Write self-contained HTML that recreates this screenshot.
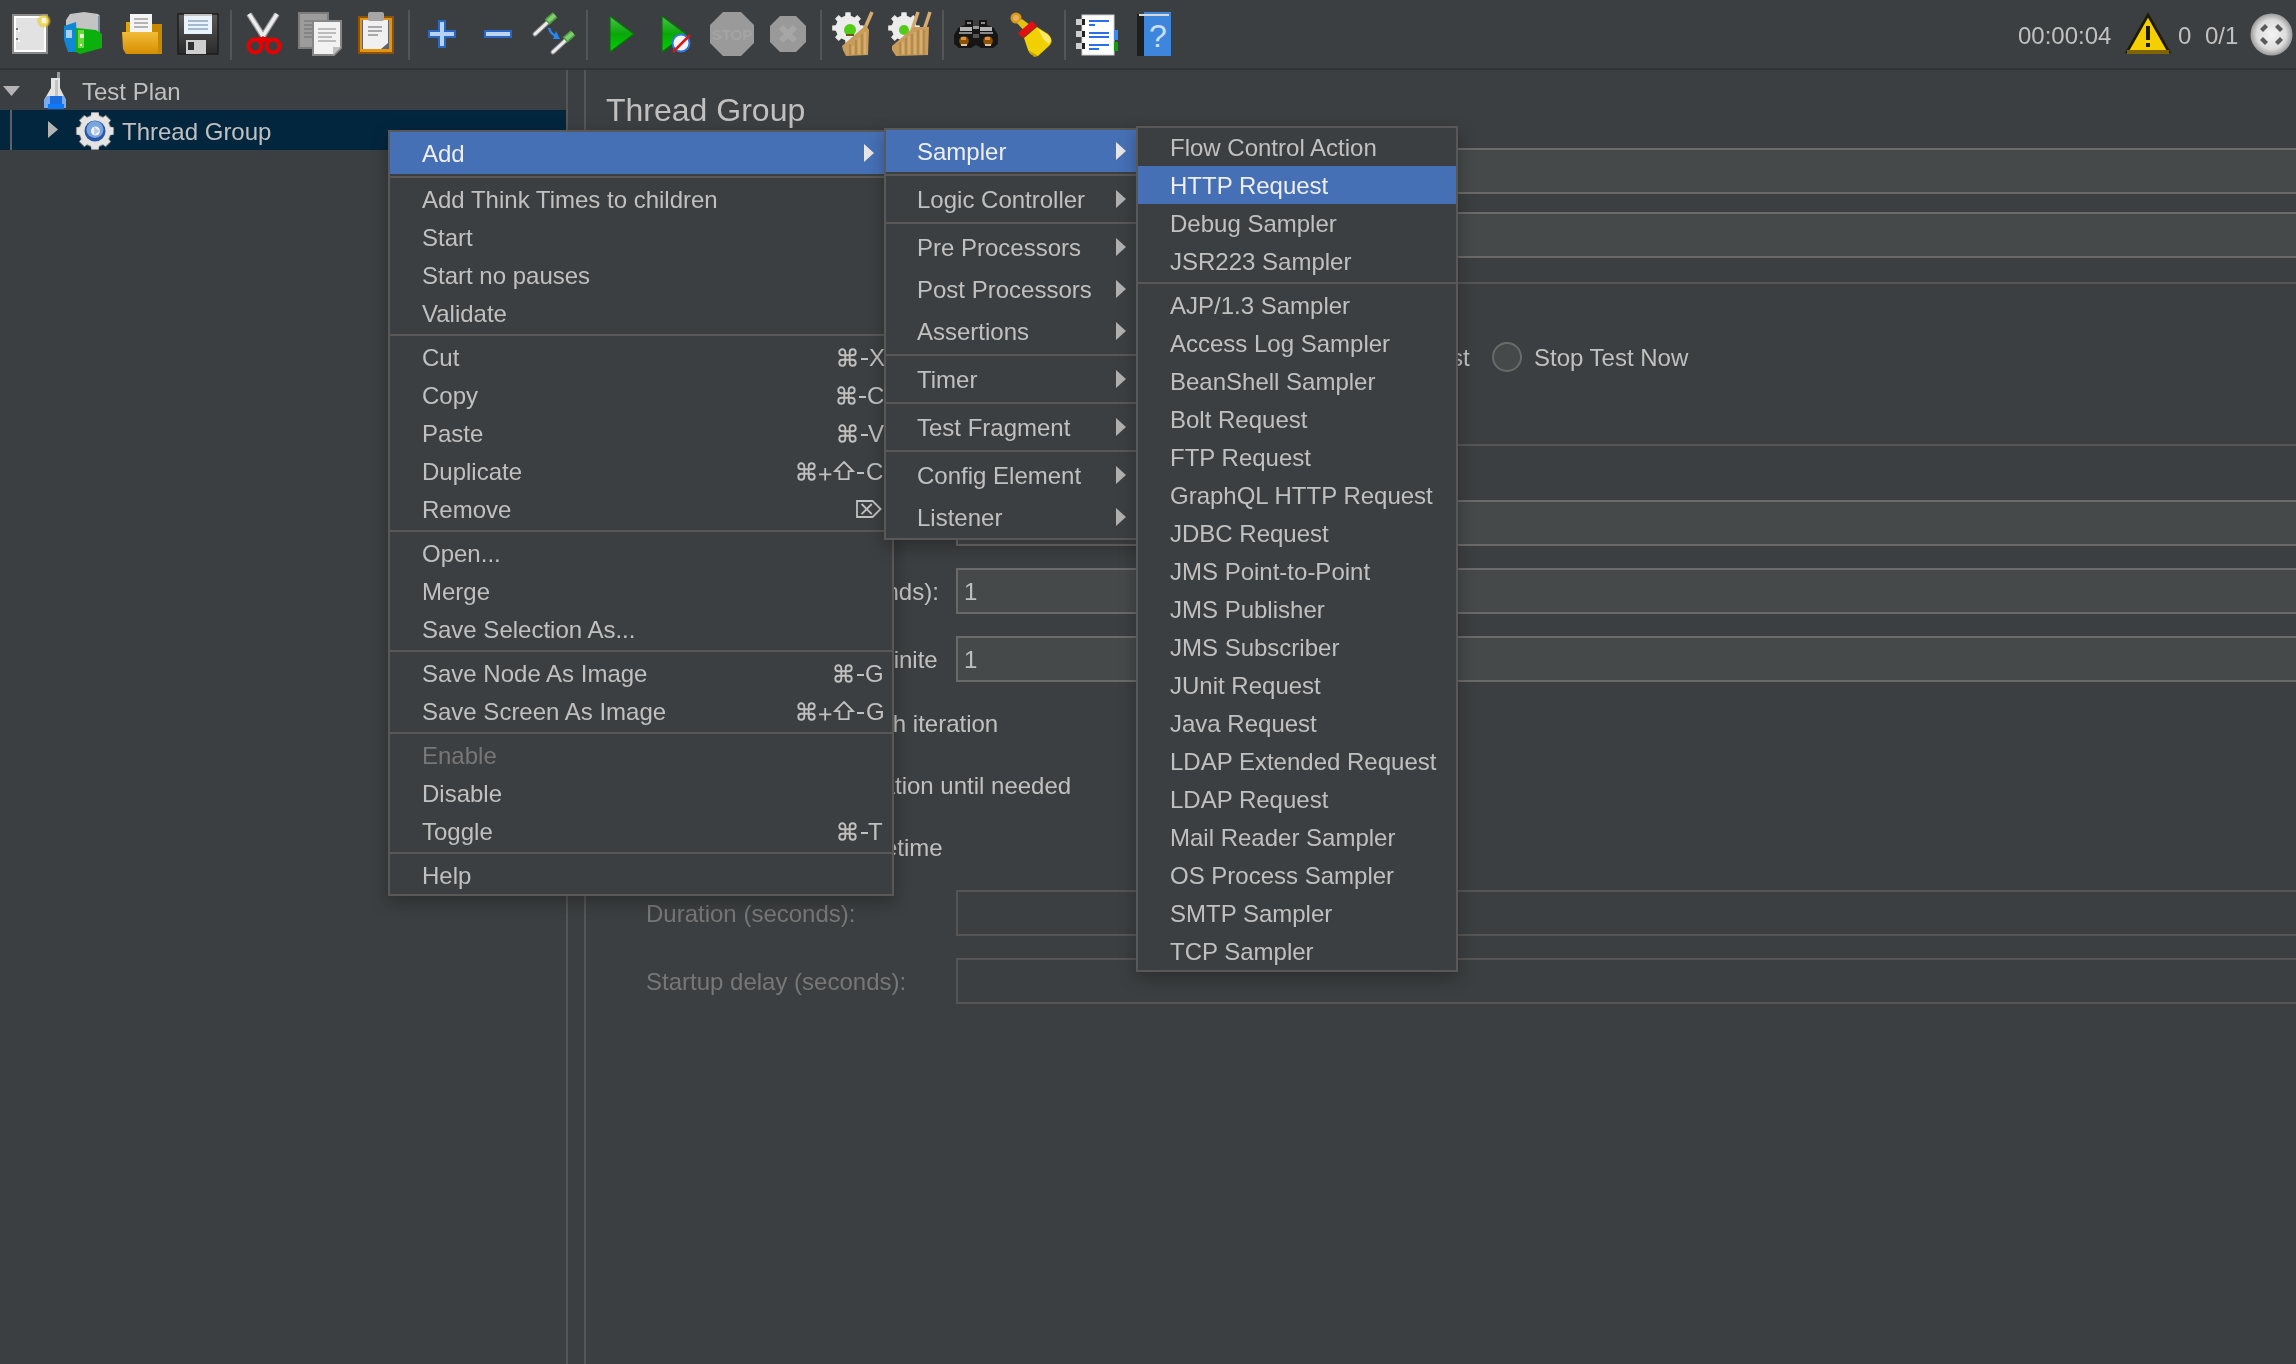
<!DOCTYPE html>
<html><head><meta charset="utf-8"><style>
html,body{margin:0;padding:0;}
body{width:2296px;height:1364px;overflow:hidden;position:relative;background:#3c3f41;font-family:"Liberation Sans",sans-serif;}
.t{position:absolute;white-space:nowrap;font-family:"Liberation Sans",sans-serif;will-change:transform;}
.ab{position:absolute;}
svg{position:absolute;overflow:visible;}
</style></head><body>

<svg style="left:0;top:0" width="2296" height="70" viewBox="0 0 2296 70"><defs><linearGradient id="gfold" x1="0" y1="0" x2="0" y2="1"><stop offset="0" stop-color="#f2bc38"/><stop offset="1" stop-color="#d68e00"/></linearGradient><linearGradient id="gplay" x1="0" y1="0" x2="0" y2="1"><stop offset="0" stop-color="#4cc04c"/><stop offset="0.5" stop-color="#0aa80a"/><stop offset="1" stop-color="#00d000"/></linearGradient><radialGradient id="gcirc" cx="0.5" cy="0.5" r="0.5"><stop offset="0" stop-color="#f4f4f4"/><stop offset="0.7" stop-color="#dcdcdc"/><stop offset="1" stop-color="#9a9a9a"/></radialGradient><linearGradient id="gflop" x1="0" y1="0" x2="0" y2="1"><stop offset="0" stop-color="#5a5a5a"/><stop offset="1" stop-color="#2a2a2a"/></linearGradient><radialGradient id="gglow" cx="0.5" cy="0.5" r="0.5"><stop offset="0" stop-color="#fff8c0"/><stop offset="0.55" stop-color="#f4dc40"/><stop offset="1" stop-color="#d8b030" stop-opacity="0.2"/></radialGradient></defs><rect x="12" y="14" width="36" height="40" fill="#8a8a8a"/><rect x="14" y="16" width="32" height="36" fill="#ffffff"/><rect x="16" y="18" width="28" height="32" fill="#e2e2e2"/><circle cx="44" cy="21" r="7" fill="url(#gglow)"/><rect x="42" y="18" width="4" height="5" fill="#f4f2ff"/><rect x="16" y="28" width="2" height="2" fill="#777"/><rect x="18" y="30" width="2" height="2" fill="#fff"/><rect x="16" y="38" width="2" height="2" fill="#777"/><rect x="18" y="40" width="2" height="2" fill="#fff"/><polygon points="70,14 84,12 98,14 100,16 100,36 66,38 66,20" fill="#c4c4c4"/><rect x="98" y="16" width="2" height="22" fill="#7a8ca0"/><polygon points="64,26 76,22 78,52 68,52 64,40" fill="#0f86d6"/><rect x="66" y="30" width="6" height="8" fill="#a8d0f4"/><polygon points="76,28 96,30 102,34 102,48 80,54 76,52" fill="#0cb00c"/><rect x="78" y="30" width="6" height="18" fill="#6ad83a"/><rect x="80" y="34" width="4" height="4" fill="#e8f0d8"/><rect x="80" y="44" width="2" height="2" fill="#fff"/><rect x="126" y="22" width="10" height="12" fill="#e2a400"/><rect x="150" y="24" width="12" height="30" fill="#c88800"/><rect x="130" y="14" width="22" height="20" fill="#f4f4f4"/><rect x="134" y="18" width="14" height="2" fill="#b4b4b4"/><rect x="134" y="22" width="14" height="2" fill="#b4b4b4"/><rect x="134" y="26" width="14" height="2" fill="#b4b4b4"/><polygon points="122,32 158,32 158,54 126,54 123,49" fill="url(#gfold)"/><rect x="178" y="14" width="40" height="40" fill="url(#gflop)"/><rect x="178" y="14" width="40" height="40" fill="none" stroke="#1e1e1e" stroke-width="1.5"/><rect x="184" y="14" width="28" height="20" fill="#eaf2fa"/><rect x="184" y="14" width="28" height="2" fill="#c4c4c4"/><rect x="188" y="20" width="20" height="2" fill="#a4b8d0"/><rect x="188" y="24" width="20" height="2" fill="#a4b8d0"/><rect x="188" y="28" width="20" height="2" fill="#a4b8d0"/><rect x="186" y="40" width="20" height="14" fill="#cfcfcf"/><rect x="188" y="42" width="6" height="8" fill="#303030"/><line x1="249" y1="14" x2="263" y2="36" stroke="#9a9a9a" stroke-width="6"/><line x1="277" y1="14" x2="263" y2="36" stroke="#9a9a9a" stroke-width="6"/><line x1="249" y1="14" x2="263" y2="36" stroke="#ececec" stroke-width="3.5"/><line x1="277" y1="14" x2="263" y2="36" stroke="#ececec" stroke-width="3.5"/><circle cx="255" cy="46" r="6.5" fill="none" stroke="#e80000" stroke-width="4"/><circle cx="273" cy="46" r="6.5" fill="none" stroke="#e80000" stroke-width="4"/><polygon points="258,37 268,37 270,42 256,42" fill="#e80000"/><rect x="299" y="13" width="29" height="35" fill="#9c9c9c" stroke="#7c7c7c" stroke-width="2"/><rect x="304" y="20" width="10" height="2" fill="#858585"/><rect x="304" y="24" width="10" height="2" fill="#858585"/><rect x="304" y="28" width="10" height="2" fill="#858585"/><rect x="304" y="32" width="10" height="2" fill="#858585"/><rect x="304" y="36" width="10" height="2" fill="#858585"/><path d="M313,21 L341,21 L341,48 L334,55 L313,55 Z" fill="#f2f2f2" stroke="#868686" stroke-width="2"/><polygon points="333,55 341,47 333,47" fill="#c0c0c0"/><rect x="318" y="28" width="18" height="2" fill="#bcbcbc"/><rect x="318" y="32" width="18" height="2" fill="#bcbcbc"/><rect x="318" y="36" width="14" height="2" fill="#bcbcbc"/><rect x="318" y="40" width="18" height="2" fill="#bcbcbc"/><rect x="359" y="17" width="34" height="36" fill="#e39410" stroke="#8e5200" stroke-width="2"/><rect x="362" y="20" width="27" height="29" fill="#5a6470"/><path d="M363,20 L388,20 L388,43 L381,49 L363,49 Z" fill="#f0f0f0"/><rect x="368" y="26" width="14" height="2" fill="#a8a8a8"/><rect x="368" y="30" width="14" height="2" fill="#a8a8a8"/><rect x="368" y="34" width="10" height="2" fill="#a8a8a8"/><rect x="368" y="12" width="16" height="9" rx="2" fill="#a6a6a6"/><path d="M438,20 H446 V30 H456 V38 H446 V48 H438 V38 H428 V30 H438 Z" fill="#2a66c4"/><path d="M440,22 H444 V32 H454 V36 H444 V46 H440 V36 H430 V32 H440 Z" fill="#b6d2f2"/><rect x="484" y="30" width="28" height="8" fill="#2a66c4"/><rect x="486" y="32" width="24" height="4" fill="#bcd6f2"/><line x1="535" y1="34" x2="548" y2="22" stroke="#8a8a8a" stroke-width="5" stroke-linecap="round"/><line x1="535" y1="34" x2="548" y2="22" stroke="#ececec" stroke-width="3" stroke-linecap="round"/><line x1="547" y1="22" x2="555" y2="15" stroke="#4aa040" stroke-width="7" stroke-linecap="butt"/><line x1="548" y1="21" x2="555" y2="15" stroke="#80cc70" stroke-width="4" stroke-linecap="butt"/><line x1="553" y1="52" x2="566" y2="40" stroke="#8a8a8a" stroke-width="5" stroke-linecap="round"/><line x1="553" y1="52" x2="566" y2="40" stroke="#ececec" stroke-width="3" stroke-linecap="round"/><line x1="565" y1="40" x2="573" y2="33" stroke="#4aa040" stroke-width="7" stroke-linecap="butt"/><line x1="566" y1="39" x2="573" y2="33" stroke="#80cc70" stroke-width="4" stroke-linecap="butt"/><path d="M549,28 Q551,35 557,36" fill="none" stroke="#2a86f0" stroke-width="2.5"/><polygon points="556,31 560,39 553,39" fill="#2a86f0"/><polygon points="610,16 634,34 610,52" fill="url(#gplay)" stroke="#0a700a" stroke-width="1.2"/><polygon points="662,16 686,34 662,52" fill="url(#gplay)" stroke="#0a700a" stroke-width="1.2"/><circle cx="681" cy="43" r="8.5" fill="#f4f4f4" stroke="#2f78d8" stroke-width="2"/><line x1="673" y1="52" x2="690" y2="35" stroke="#d81818" stroke-width="2.5"/><polygon points="723,12 741,12 754,25 754,43 741,56 723,56 710,43 710,25" fill="#9a9a9a"/><text x="732" y="40" text-anchor="middle" font-family="Liberation Sans" font-weight="bold" font-size="15" fill="#a4a4a4">STOP</text><polygon points="780,16 796,16 806,26 806,42 796,52 780,52 770,42 770,26" fill="#999999"/><path d="M781,27 L795,41 M795,27 L781,41" stroke="#a6a6a6" stroke-width="6"/><path d="M845.2,15.8 L845.4,12.2 L850.6,12.2 L850.8,15.8 L854.6,17.4 L857.3,15.0 L861.0,18.7 L858.6,21.4 L860.2,25.2 L863.8,25.4 L863.8,30.6 L860.2,30.8 L858.6,34.6 L861.0,37.3 L857.3,41.0 L854.6,38.6 L850.8,40.2 L850.6,43.8 L845.4,43.8 L845.2,40.2 L841.4,38.6 L838.7,41.0 L835.0,37.3 L837.4,34.6 L835.8,30.8 L832.2,30.6 L832.2,25.4 L835.8,25.2 L837.4,21.4 L835.0,18.7 L838.7,15.0 L841.4,17.4 Z" fill="#ececec"/><circle cx="850" cy="30" r="6" fill="#52cc16"/><rect x="846" y="34" width="8" height="2" fill="#6a5a10"/><line x1="865" y1="28" x2="872" y2="12" stroke="#d4ac72" stroke-width="3.5"/><polygon points="842,46 866,25 869,30 868,55 846,56 843,50" fill="#c79c5c"/><path d="M850,44 V55 M856,40 V55 M862,34 V55" stroke="#b08448" stroke-width="1.5"/><path d="M853,46 V54 M859,38 V54 M865,32 V54" stroke="#e2b878" stroke-width="1.2"/><path d="M901.2,15.8 L901.4,12.2 L906.6,12.2 L906.8,15.8 L910.6,17.4 L913.3,15.0 L917.0,18.7 L914.6,21.4 L916.2,25.2 L919.8,25.4 L919.8,30.6 L916.2,30.8 L914.6,34.6 L917.0,37.3 L913.3,41.0 L910.6,38.6 L906.8,40.2 L906.6,43.8 L901.4,43.8 L901.2,40.2 L897.4,38.6 L894.7,41.0 L891.0,37.3 L893.4,34.6 L891.8,30.8 L888.2,30.6 L888.2,25.4 L891.8,25.2 L893.4,21.4 L891.0,18.7 L894.7,15.0 L897.4,17.4 Z" fill="#ececec"/><circle cx="904" cy="30" r="5" fill="#52cc16"/><line x1="912" y1="30" x2="918" y2="12" stroke="#d4ac72" stroke-width="3.5"/><line x1="924" y1="30" x2="930" y2="12" stroke="#d4ac72" stroke-width="3.5"/><polygon points="892,46 914,27 929,27 928,55 896,56 892,50" fill="#c79c5c"/><path d="M900,42 V55 M906,38 V55 M912,34 V55 M918,30 V55 M924,30 V55" stroke="#b08448" stroke-width="1.5"/><path d="M903,42 V54 M909,36 V54 M915,32 V54 M921,30 V54" stroke="#e2b878" stroke-width="1.2"/><path d="M965,20 H973 V25 L976,30 V45 L971,48 H959 L954,44 V35 L958,28 L965,25 Z" fill="#161616"/><path d="M987,20 H979 V25 L976,30 V45 L981,48 H993 L998,44 V35 L994,28 L987,25 Z" fill="#161616"/><rect x="967" y="22" width="4" height="2" fill="#8a8a8a"/><rect x="981" y="22" width="4" height="2" fill="#8a8a8a"/><rect x="960" y="27" width="12" height="4" fill="#b4b4b4"/><rect x="980" y="27" width="12" height="4" fill="#b4b4b4"/><rect x="959" y="32" width="13" height="2" fill="#8a8a8a"/><rect x="980" y="32" width="13" height="2" fill="#8a8a8a"/><rect x="973" y="26" width="6" height="3" fill="#9a9a9a"/><rect x="973" y="34" width="6" height="4" fill="#555"/><circle cx="964" cy="41" r="4.8" fill="#8c5200"/><circle cx="988" cy="41" r="4.8" fill="#8c5200"/><rect x="961" y="37" width="5" height="3" fill="#e0904a"/><rect x="985" y="37" width="5" height="3" fill="#e0904a"/><rect x="961" y="44" width="6" height="2" fill="#d8c4a8"/><rect x="985" y="44" width="6" height="2" fill="#d8c4a8"/><circle cx="1016" cy="18" r="5.5" fill="#d89a18"/><circle cx="1016" cy="18" r="3" fill="#eab060"/><polygon points="1017,23 1022,19 1034,28 1027,34" fill="#e2c018"/><polygon points="1018,33 1032,21 1037,26 1023,38" fill="#e41010"/><path d="M1024,38 L1037,27 L1048,34 Q1054,40 1050,45 L1038,56 Q1031,57 1028,50 Z" fill="#f0d000"/><path d="M1038,29 L1048,35 Q1053,40 1049,44 L1044,40 Z" fill="#f8e870"/><polygon points="1028,50 1038,56 1034,57" fill="#c8a000"/><rect x="1082" y="15" width="32" height="40" fill="#ffffff"/><rect x="1082" y="15" width="32" height="40" fill="none" stroke="#d0d0d0" stroke-width="1"/><rect x="1076" y="19" width="8" height="6" fill="#d0d0d0"/><rect x="1082" y="19" width="3" height="6" fill="#222"/><rect x="1076" y="31" width="8" height="6" fill="#d0d0d0"/><rect x="1082" y="31" width="3" height="6" fill="#222"/><rect x="1076" y="43" width="8" height="6" fill="#d0d0d0"/><rect x="1082" y="43" width="3" height="6" fill="#222"/><rect x="1089" y="20" width="20" height="2" fill="#2a6ee8"/><rect x="1089" y="24" width="6" height="2" fill="#2a6ee8"/><rect x="1089" y="32" width="20" height="2" fill="#2a6ee8"/><rect x="1089" y="36" width="20" height="2" fill="#2a6ee8"/><rect x="1089" y="44" width="20" height="2" fill="#2a6ee8"/><rect x="1089" y="48" width="10" height="2" fill="#2a6ee8"/><rect x="1114" y="30" width="4" height="10" fill="#3a8af0"/><rect x="1114" y="42" width="4" height="9" fill="#12a012"/><rect x="1137" y="14" width="8" height="42" fill="#1e1e1e"/><rect x="1144" y="12" width="27" height="44" fill="#3e86dc"/><rect x="1139" y="14" width="30" height="2" fill="#d8d8d8"/><text x="1158" y="47" text-anchor="middle" font-family="Liberation Sans" font-size="32" fill="#cfe0f6">?</text><polygon points="2148,15 2169,52 2127,52" fill="#f6cf00" stroke="#1e1a00" stroke-width="2.6" stroke-linejoin="miter"/><rect x="2127" y="50" width="42" height="4" fill="#806400"/><rect x="2146" y="26" width="4" height="14" fill="#1e1a00"/><rect x="2146" y="43" width="4" height="4" fill="#1e1a00"/><circle cx="2271.5" cy="34.5" r="21" fill="url(#gcirc)"/><path d="M2260,29 L2265,24 L2268,27 L2263,32 Z" fill="#5a5a5a"/><path d="M2283,29 L2278,24 L2275,27 L2280,32 Z" fill="#5a5a5a"/><path d="M2260,40 L2265,45 L2268,42 L2263,37 Z" fill="#5a5a5a"/><path d="M2283,40 L2278,45 L2275,42 L2280,37 Z" fill="#5a5a5a"/></svg>
<div style="position:absolute;left:0px;top:68px;width:2296px;height:2px;background:#313335;"></div>
<div style="position:absolute;left:230px;top:10px;width:2px;height:50px;background:#555555;"></div>
<div style="position:absolute;left:408px;top:10px;width:2px;height:50px;background:#555555;"></div>
<div style="position:absolute;left:586px;top:10px;width:2px;height:50px;background:#555555;"></div>
<div style="position:absolute;left:820px;top:10px;width:2px;height:50px;background:#555555;"></div>
<div style="position:absolute;left:942px;top:10px;width:2px;height:50px;background:#555555;"></div>
<div style="position:absolute;left:1064px;top:10px;width:2px;height:50px;background:#555555;"></div>
<div style="position:absolute;left:566px;top:70px;width:2px;height:1294px;background:#555555;"></div>
<div style="position:absolute;left:584px;top:70px;width:2px;height:1294px;background:#555555;"></div>
<svg style="left:0;top:0" width="600" height="160"><polygon points="3,86 20,86 11.5,96" fill="#b4b4b4"/></svg>
<div class="t" style="left:82px;top:77px;font-size:24px;line-height:30px;color:#c0c0c0;">Test Plan</div>
<div style="position:absolute;left:0px;top:110px;width:566px;height:40px;background:#03263f;"></div>
<div style="position:absolute;left:10px;top:110px;width:2px;height:40px;background:#5e6266;"></div>
<svg style="left:0;top:0" width="600" height="160"><polygon points="48,121 58,129.5 48,138" fill="#b4b4b4"/></svg>
<div class="t" style="left:122px;top:117px;font-size:24px;line-height:30px;color:#c0c0c0;">Thread Group</div>
<svg style="left:0;top:0" width="130" height="160" viewBox="0 0 130 160"><rect x="57" y="72" width="3" height="7" fill="#9a9a9a"/><polygon points="51,78 60,78 60,88 66,100 66,108 44,108 44,100 51,88" fill="#e4e4e4"/><rect x="55" y="80" width="3" height="18" fill="#c4c4c4"/><polygon points="47,96 64,96 66,100 66,108 44,108 44,100" fill="#7aaaf0"/><polygon points="50,96 62,96 62,108 50,108" fill="#1a6ee0"/><rect x="48" y="104" width="16" height="5" fill="#0a7af8"/><path d="M90.8,115.1 L91.2,111.9 L98.8,111.9 L99.2,115.1 L103.3,116.7 L105.8,114.8 L111.2,120.2 L109.3,122.7 L110.9,126.8 L114.1,127.2 L114.1,134.8 L110.9,135.2 L109.3,139.3 L111.2,141.8 L105.8,147.2 L103.3,145.3 L99.2,146.9 L98.8,150.1 L91.2,150.1 L90.8,146.9 L86.7,145.3 L84.2,147.2 L78.8,141.8 L80.7,139.3 L79.1,135.2 L75.9,134.8 L75.9,127.2 L79.1,126.8 L80.7,122.7 L78.8,120.2 L84.2,114.8 L86.7,116.7 Z" fill="#7a7a7a"/><path d="M91.1,116.0 L91.5,112.8 L98.5,112.8 L98.9,116.0 L102.9,117.7 L105.4,115.7 L110.3,120.6 L108.3,123.1 L110.0,127.1 L113.2,127.5 L113.2,134.5 L110.0,134.9 L108.3,138.9 L110.3,141.4 L105.4,146.3 L102.9,144.3 L98.9,146.0 L98.5,149.2 L91.5,149.2 L91.1,146.0 L87.1,144.3 L84.6,146.3 L79.7,141.4 L81.7,138.9 L80.0,134.9 L76.8,134.5 L76.8,127.5 L80.0,127.1 L81.7,123.1 L79.7,120.6 L84.6,115.7 L87.1,117.7 Z" fill="#e4e4e4"/><circle cx="95" cy="131" r="10.5" fill="#2a56a8"/><circle cx="95" cy="129.5" r="8.5" fill="#7aa4dc"/><circle cx="95.5" cy="131" r="4.5" fill="#f2f2f2"/><polygon points="94,127 100,131 94,135" fill="#b8cce8"/></svg>
<div class="t" style="left:606px;top:90px;font-size:32px;line-height:40px;color:#c0c0c0;">Thread Group</div>
<div class="ab" style="left:700px;top:148px;width:1606px;height:42px;background:#45494a;border:2px solid #6a6a6a;"></div>
<div class="ab" style="left:700px;top:212px;width:1606px;height:42px;background:#45494a;border:2px solid #6a6a6a;"></div>
<div style="position:absolute;left:600px;top:282px;width:1696px;height:2px;background:#555555;"></div>
<div style="position:absolute;left:600px;top:444px;width:1696px;height:2px;background:#555555;"></div>
<div class="t" style="left:1370px;top:343px;font-size:24px;line-height:30px;color:#c0c0c0;">Stop Test</div>
<div class="ab" style="left:1492px;top:342px;width:26px;height:26px;border-radius:50%;border:2px solid #6a6a6a;background:#45494a;"></div>
<div class="t" style="left:1534px;top:343px;font-size:24px;line-height:30px;color:#c0c0c0;">Stop Test Now</div>
<div class="ab" style="left:956px;top:500px;width:1350px;height:42px;background:#45494a;border:2px solid #6a6a6a;"></div>
<div class="t" style="left:964px;top:509px;font-size:24px;line-height:30px;color:#c0c0c0;">1</div>
<div class="ab" style="left:956px;top:568px;width:1350px;height:42px;background:#45494a;border:2px solid #6a6a6a;"></div>
<div class="t" style="left:964px;top:577px;font-size:24px;line-height:30px;color:#c0c0c0;">1</div>
<div class="ab" style="left:956px;top:636px;width:1350px;height:42px;background:#45494a;border:2px solid #6a6a6a;"></div>
<div class="t" style="left:964px;top:645px;font-size:24px;line-height:30px;color:#c0c0c0;">1</div>
<div class="t" style="left:648px;top:577px;font-size:24px;line-height:30px;color:#c0c0c0;">Ramp-up period (seconds):</div>
<div class="t" style="left:647px;top:645px;font-size:24px;line-height:30px;color:#c0c0c0;">Loop Count:</div>
<div class="t" style="left:867px;top:645px;font-size:24px;line-height:30px;color:#c0c0c0;">Infinite</div>
<div class="t" style="left:698px;top:709px;font-size:24px;line-height:30px;color:#c0c0c0;">Same user on each iteration</div>
<div class="t" style="left:698px;top:771px;font-size:24px;line-height:30px;color:#c0c0c0;">Delay Thread creation until needed</div>
<div class="t" style="left:699px;top:833px;font-size:24px;line-height:30px;color:#c0c0c0;">Specify Thread lifetime</div>
<div class="t" style="left:646px;top:899px;font-size:24px;line-height:30px;color:#777777;">Duration (seconds):</div>
<div class="t" style="left:646px;top:967px;font-size:24px;line-height:30px;color:#777777;">Startup delay (seconds):</div>
<div class="ab" style="left:956px;top:890px;width:1350px;height:42px;background:#3c3f41;border:2px solid #555555;"></div>
<div class="ab" style="left:956px;top:958px;width:1350px;height:42px;background:#3c3f41;border:2px solid #555555;"></div>
<div class="ab" style="left:388px;top:130px;width:502px;height:762px;background:#3c3f41;border:2px solid #585858;box-shadow:0 6px 16px rgba(0,0,0,0.28);"></div>
<div style="position:absolute;left:390px;top:132px;width:502px;height:42px;background:#4670b6;"></div>
<div class="t" style="left:422px;top:139px;font-size:24px;line-height:30px;color:#eeeeee">Add</div>
<svg style="left:0;top:0" width="1" height="1"><polygon points="864,144 874,153 864,162" fill="#e6e6e6"/></svg>
<div style="position:absolute;left:390px;top:176px;width:502px;height:2px;background:#585858;"></div>
<div class="t" style="left:422px;top:185px;font-size:24px;line-height:30px;color:#c0c0c0">Add Think Times to children</div>
<div class="t" style="left:422px;top:223px;font-size:24px;line-height:30px;color:#c0c0c0">Start</div>
<div class="t" style="left:422px;top:261px;font-size:24px;line-height:30px;color:#c0c0c0">Start no pauses</div>
<div class="t" style="left:422px;top:299px;font-size:24px;line-height:30px;color:#c0c0c0">Validate</div>
<div style="position:absolute;left:390px;top:334px;width:502px;height:2px;background:#585858;"></div>
<div class="t" style="left:422px;top:343px;font-size:24px;line-height:30px;color:#c0c0c0">Cut</div>
<svg style="left:838px;top:348px" width="19" height="19" viewBox="0 0 19 19"><path d="M7.3,4.3 V14.7 M11.7,4.3 V14.7 M4.3,7.3 H14.7 M4.3,11.7 H14.7 M7.3,4.3 A3,3 0 1 0 4.3,7.3 M11.7,4.3 A3,3 0 1 1 14.7,7.3 M4.3,11.7 A3,3 0 1 0 7.3,14.7 M14.7,11.7 A3,3 0 1 1 11.7,14.7" fill="none" stroke="#c0c0c0" stroke-width="1.9"/></svg><div class="ab" style="left:861px;top:358px;width:7px;height:2px;background:#c0c0c0"></div><div class="t" style="left:869px;top:343px;font-size:24px;line-height:30px;color:#c0c0c0">X</div>
<div class="t" style="left:422px;top:381px;font-size:24px;line-height:30px;color:#c0c0c0">Copy</div>
<svg style="left:837px;top:386px" width="19" height="19" viewBox="0 0 19 19"><path d="M7.3,4.3 V14.7 M11.7,4.3 V14.7 M4.3,7.3 H14.7 M4.3,11.7 H14.7 M7.3,4.3 A3,3 0 1 0 4.3,7.3 M11.7,4.3 A3,3 0 1 1 14.7,7.3 M4.3,11.7 A3,3 0 1 0 7.3,14.7 M14.7,11.7 A3,3 0 1 1 11.7,14.7" fill="none" stroke="#c0c0c0" stroke-width="1.9"/></svg><div class="ab" style="left:859px;top:396px;width:7px;height:2px;background:#c0c0c0"></div><div class="t" style="left:867px;top:381px;font-size:24px;line-height:30px;color:#c0c0c0">C</div>
<div class="t" style="left:422px;top:419px;font-size:24px;line-height:30px;color:#c0c0c0">Paste</div>
<svg style="left:838px;top:424px" width="19" height="19" viewBox="0 0 19 19"><path d="M7.3,4.3 V14.7 M11.7,4.3 V14.7 M4.3,7.3 H14.7 M4.3,11.7 H14.7 M7.3,4.3 A3,3 0 1 0 4.3,7.3 M11.7,4.3 A3,3 0 1 1 14.7,7.3 M4.3,11.7 A3,3 0 1 0 7.3,14.7 M14.7,11.7 A3,3 0 1 1 11.7,14.7" fill="none" stroke="#c0c0c0" stroke-width="1.9"/></svg><div class="ab" style="left:861px;top:434px;width:7px;height:2px;background:#c0c0c0"></div><div class="t" style="left:868px;top:419px;font-size:24px;line-height:30px;color:#c0c0c0">V</div>
<div class="t" style="left:422px;top:457px;font-size:24px;line-height:30px;color:#c0c0c0">Duplicate</div>
<svg style="left:797px;top:462px" width="19" height="19" viewBox="0 0 19 19"><path d="M7.3,4.3 V14.7 M11.7,4.3 V14.7 M4.3,7.3 H14.7 M4.3,11.7 H14.7 M7.3,4.3 A3,3 0 1 0 4.3,7.3 M11.7,4.3 A3,3 0 1 1 14.7,7.3 M4.3,11.7 A3,3 0 1 0 7.3,14.7 M14.7,11.7 A3,3 0 1 1 11.7,14.7" fill="none" stroke="#c0c0c0" stroke-width="1.9"/></svg><svg style="left:819px;top:468px" width="13" height="13" viewBox="0 0 13 13"><path d="M6.2,0 V12.5 M0,6.4 H12.4" stroke="#c0c0c0" stroke-width="1.8" fill="none"/></svg><svg style="left:834px;top:461px" width="20" height="19" viewBox="0 0 20 19"><path d="M10,1 L19,10.2 L14.6,10.2 L14.6,18.1 L5.4,18.1 L5.4,10.2 L1,10.2 Z" fill="none" stroke="#c0c0c0" stroke-width="1.8"/></svg><div class="ab" style="left:857px;top:472px;width:7px;height:2px;background:#c0c0c0"></div><div class="t" style="left:866px;top:457px;font-size:24px;line-height:30px;color:#c0c0c0">C</div>
<div class="t" style="left:422px;top:495px;font-size:24px;line-height:30px;color:#c0c0c0">Remove</div>
<svg style="left:856px;top:500px" width="26" height="19" viewBox="0 0 26 19"><path d="M1,1 L16.6,1 L24.6,9 L16.6,17 L1,17 Z M5.6,4 L15.8,14.2 M15.8,4 L5.6,14.2" fill="none" stroke="#c0c0c0" stroke-width="1.8"/></svg>
<div style="position:absolute;left:390px;top:530px;width:502px;height:2px;background:#585858;"></div>
<div class="t" style="left:422px;top:539px;font-size:24px;line-height:30px;color:#c0c0c0">Open...</div>
<div class="t" style="left:422px;top:577px;font-size:24px;line-height:30px;color:#c0c0c0">Merge</div>
<div class="t" style="left:422px;top:615px;font-size:24px;line-height:30px;color:#c0c0c0">Save Selection As...</div>
<div style="position:absolute;left:390px;top:650px;width:502px;height:2px;background:#585858;"></div>
<div class="t" style="left:422px;top:659px;font-size:24px;line-height:30px;color:#c0c0c0">Save Node As Image</div>
<svg style="left:834px;top:664px" width="19" height="19" viewBox="0 0 19 19"><path d="M7.3,4.3 V14.7 M11.7,4.3 V14.7 M4.3,7.3 H14.7 M4.3,11.7 H14.7 M7.3,4.3 A3,3 0 1 0 4.3,7.3 M11.7,4.3 A3,3 0 1 1 14.7,7.3 M4.3,11.7 A3,3 0 1 0 7.3,14.7 M14.7,11.7 A3,3 0 1 1 11.7,14.7" fill="none" stroke="#c0c0c0" stroke-width="1.9"/></svg><div class="ab" style="left:857px;top:674px;width:7px;height:2px;background:#c0c0c0"></div><div class="t" style="left:865px;top:659px;font-size:24px;line-height:30px;color:#c0c0c0">G</div>
<div class="t" style="left:422px;top:697px;font-size:24px;line-height:30px;color:#c0c0c0">Save Screen As Image</div>
<svg style="left:797px;top:702px" width="19" height="19" viewBox="0 0 19 19"><path d="M7.3,4.3 V14.7 M11.7,4.3 V14.7 M4.3,7.3 H14.7 M4.3,11.7 H14.7 M7.3,4.3 A3,3 0 1 0 4.3,7.3 M11.7,4.3 A3,3 0 1 1 14.7,7.3 M4.3,11.7 A3,3 0 1 0 7.3,14.7 M14.7,11.7 A3,3 0 1 1 11.7,14.7" fill="none" stroke="#c0c0c0" stroke-width="1.9"/></svg><svg style="left:819px;top:708px" width="13" height="13" viewBox="0 0 13 13"><path d="M6.2,0 V12.5 M0,6.4 H12.4" stroke="#c0c0c0" stroke-width="1.8" fill="none"/></svg><svg style="left:834px;top:701px" width="20" height="19" viewBox="0 0 20 19"><path d="M10,1 L19,10.2 L14.6,10.2 L14.6,18.1 L5.4,18.1 L5.4,10.2 L1,10.2 Z" fill="none" stroke="#c0c0c0" stroke-width="1.8"/></svg><div class="ab" style="left:857px;top:712px;width:7px;height:2px;background:#c0c0c0"></div><div class="t" style="left:866px;top:697px;font-size:24px;line-height:30px;color:#c0c0c0">G</div>
<div style="position:absolute;left:390px;top:732px;width:502px;height:2px;background:#585858;"></div>
<div class="t" style="left:422px;top:741px;font-size:24px;line-height:30px;color:#777777">Enable</div>
<div class="t" style="left:422px;top:779px;font-size:24px;line-height:30px;color:#c0c0c0">Disable</div>
<div class="t" style="left:422px;top:817px;font-size:24px;line-height:30px;color:#c0c0c0">Toggle</div>
<svg style="left:838px;top:822px" width="19" height="19" viewBox="0 0 19 19"><path d="M7.3,4.3 V14.7 M11.7,4.3 V14.7 M4.3,7.3 H14.7 M4.3,11.7 H14.7 M7.3,4.3 A3,3 0 1 0 4.3,7.3 M11.7,4.3 A3,3 0 1 1 14.7,7.3 M4.3,11.7 A3,3 0 1 0 7.3,14.7 M14.7,11.7 A3,3 0 1 1 11.7,14.7" fill="none" stroke="#c0c0c0" stroke-width="1.9"/></svg><div class="ab" style="left:861px;top:832px;width:7px;height:2px;background:#c0c0c0"></div><div class="t" style="left:868px;top:817px;font-size:24px;line-height:30px;color:#c0c0c0">T</div>
<div style="position:absolute;left:390px;top:852px;width:502px;height:2px;background:#585858;"></div>
<div class="t" style="left:422px;top:861px;font-size:24px;line-height:30px;color:#c0c0c0">Help</div>
<div class="ab" style="left:884px;top:128px;width:258px;height:408px;background:#3c3f41;border:2px solid #585858;box-shadow:0 6px 16px rgba(0,0,0,0.28);"></div>
<div style="position:absolute;left:886px;top:130px;width:258px;height:42px;background:#4670b6;"></div>
<div class="t" style="left:917px;top:137px;font-size:24px;line-height:30px;color:#eeeeee">Sampler</div>
<svg style="left:0;top:0" width="1" height="1"><polygon points="1116,142 1126,151 1116,160" fill="#e6e6e6"/></svg>
<div style="position:absolute;left:886px;top:174px;width:258px;height:2px;background:#585858;"></div>
<div class="t" style="left:917px;top:185px;font-size:24px;line-height:30px;color:#c0c0c0">Logic Controller</div>
<svg style="left:0;top:0" width="1" height="1"><polygon points="1116,190 1126,199 1116,208" fill="#b0b0b0"/></svg>
<div style="position:absolute;left:886px;top:222px;width:258px;height:2px;background:#585858;"></div>
<div class="t" style="left:917px;top:233px;font-size:24px;line-height:30px;color:#c0c0c0">Pre Processors</div>
<svg style="left:0;top:0" width="1" height="1"><polygon points="1116,238 1126,247 1116,256" fill="#b0b0b0"/></svg>
<div class="t" style="left:917px;top:275px;font-size:24px;line-height:30px;color:#c0c0c0">Post Processors</div>
<svg style="left:0;top:0" width="1" height="1"><polygon points="1116,280 1126,289 1116,298" fill="#b0b0b0"/></svg>
<div class="t" style="left:917px;top:317px;font-size:24px;line-height:30px;color:#c0c0c0">Assertions</div>
<svg style="left:0;top:0" width="1" height="1"><polygon points="1116,322 1126,331 1116,340" fill="#b0b0b0"/></svg>
<div style="position:absolute;left:886px;top:354px;width:258px;height:2px;background:#585858;"></div>
<div class="t" style="left:917px;top:365px;font-size:24px;line-height:30px;color:#c0c0c0">Timer</div>
<svg style="left:0;top:0" width="1" height="1"><polygon points="1116,370 1126,379 1116,388" fill="#b0b0b0"/></svg>
<div style="position:absolute;left:886px;top:402px;width:258px;height:2px;background:#585858;"></div>
<div class="t" style="left:917px;top:413px;font-size:24px;line-height:30px;color:#c0c0c0">Test Fragment</div>
<svg style="left:0;top:0" width="1" height="1"><polygon points="1116,418 1126,427 1116,436" fill="#b0b0b0"/></svg>
<div style="position:absolute;left:886px;top:450px;width:258px;height:2px;background:#585858;"></div>
<div class="t" style="left:917px;top:461px;font-size:24px;line-height:30px;color:#c0c0c0">Config Element</div>
<svg style="left:0;top:0" width="1" height="1"><polygon points="1116,466 1126,475 1116,484" fill="#b0b0b0"/></svg>
<div class="t" style="left:917px;top:503px;font-size:24px;line-height:30px;color:#c0c0c0">Listener</div>
<svg style="left:0;top:0" width="1" height="1"><polygon points="1116,508 1126,517 1116,526" fill="#b0b0b0"/></svg>
<div class="ab" style="left:1136px;top:126px;width:318px;height:842px;background:#3c3f41;border:2px solid #585858;box-shadow:0 6px 16px rgba(0,0,0,0.28);"></div>
<div class="t" style="left:1170px;top:133px;font-size:24px;line-height:30px;color:#c0c0c0">Flow Control Action</div>
<div style="position:absolute;left:1138px;top:166px;width:318px;height:38px;background:#4670b6;"></div>
<div class="t" style="left:1170px;top:171px;font-size:24px;line-height:30px;color:#eeeeee">HTTP Request</div>
<div class="t" style="left:1170px;top:209px;font-size:24px;line-height:30px;color:#c0c0c0">Debug Sampler</div>
<div class="t" style="left:1170px;top:247px;font-size:24px;line-height:30px;color:#c0c0c0">JSR223 Sampler</div>
<div style="position:absolute;left:1138px;top:282px;width:318px;height:2px;background:#585858;"></div>
<div class="t" style="left:1170px;top:291px;font-size:24px;line-height:30px;color:#c0c0c0">AJP/1.3 Sampler</div>
<div class="t" style="left:1170px;top:329px;font-size:24px;line-height:30px;color:#c0c0c0">Access Log Sampler</div>
<div class="t" style="left:1170px;top:367px;font-size:24px;line-height:30px;color:#c0c0c0">BeanShell Sampler</div>
<div class="t" style="left:1170px;top:405px;font-size:24px;line-height:30px;color:#c0c0c0">Bolt Request</div>
<div class="t" style="left:1170px;top:443px;font-size:24px;line-height:30px;color:#c0c0c0">FTP Request</div>
<div class="t" style="left:1170px;top:481px;font-size:24px;line-height:30px;color:#c0c0c0">GraphQL HTTP Request</div>
<div class="t" style="left:1170px;top:519px;font-size:24px;line-height:30px;color:#c0c0c0">JDBC Request</div>
<div class="t" style="left:1170px;top:557px;font-size:24px;line-height:30px;color:#c0c0c0">JMS Point-to-Point</div>
<div class="t" style="left:1170px;top:595px;font-size:24px;line-height:30px;color:#c0c0c0">JMS Publisher</div>
<div class="t" style="left:1170px;top:633px;font-size:24px;line-height:30px;color:#c0c0c0">JMS Subscriber</div>
<div class="t" style="left:1170px;top:671px;font-size:24px;line-height:30px;color:#c0c0c0">JUnit Request</div>
<div class="t" style="left:1170px;top:709px;font-size:24px;line-height:30px;color:#c0c0c0">Java Request</div>
<div class="t" style="left:1170px;top:747px;font-size:24px;line-height:30px;color:#c0c0c0">LDAP Extended Request</div>
<div class="t" style="left:1170px;top:785px;font-size:24px;line-height:30px;color:#c0c0c0">LDAP Request</div>
<div class="t" style="left:1170px;top:823px;font-size:24px;line-height:30px;color:#c0c0c0">Mail Reader Sampler</div>
<div class="t" style="left:1170px;top:861px;font-size:24px;line-height:30px;color:#c0c0c0">OS Process Sampler</div>
<div class="t" style="left:1170px;top:899px;font-size:24px;line-height:30px;color:#c0c0c0">SMTP Sampler</div>
<div class="t" style="left:1170px;top:937px;font-size:24px;line-height:30px;color:#c0c0c0">TCP Sampler</div>
<div class="t" style="left:2018px;top:21px;font-size:24px;line-height:30px;color:#c0c0c0;">00:00:04</div>
<div class="t" style="left:2178px;top:21px;font-size:24px;line-height:30px;color:#c0c0c0;">0</div>
<div class="t" style="left:2205px;top:21px;font-size:24px;line-height:30px;color:#c0c0c0;">0/1</div>
</body></html>
